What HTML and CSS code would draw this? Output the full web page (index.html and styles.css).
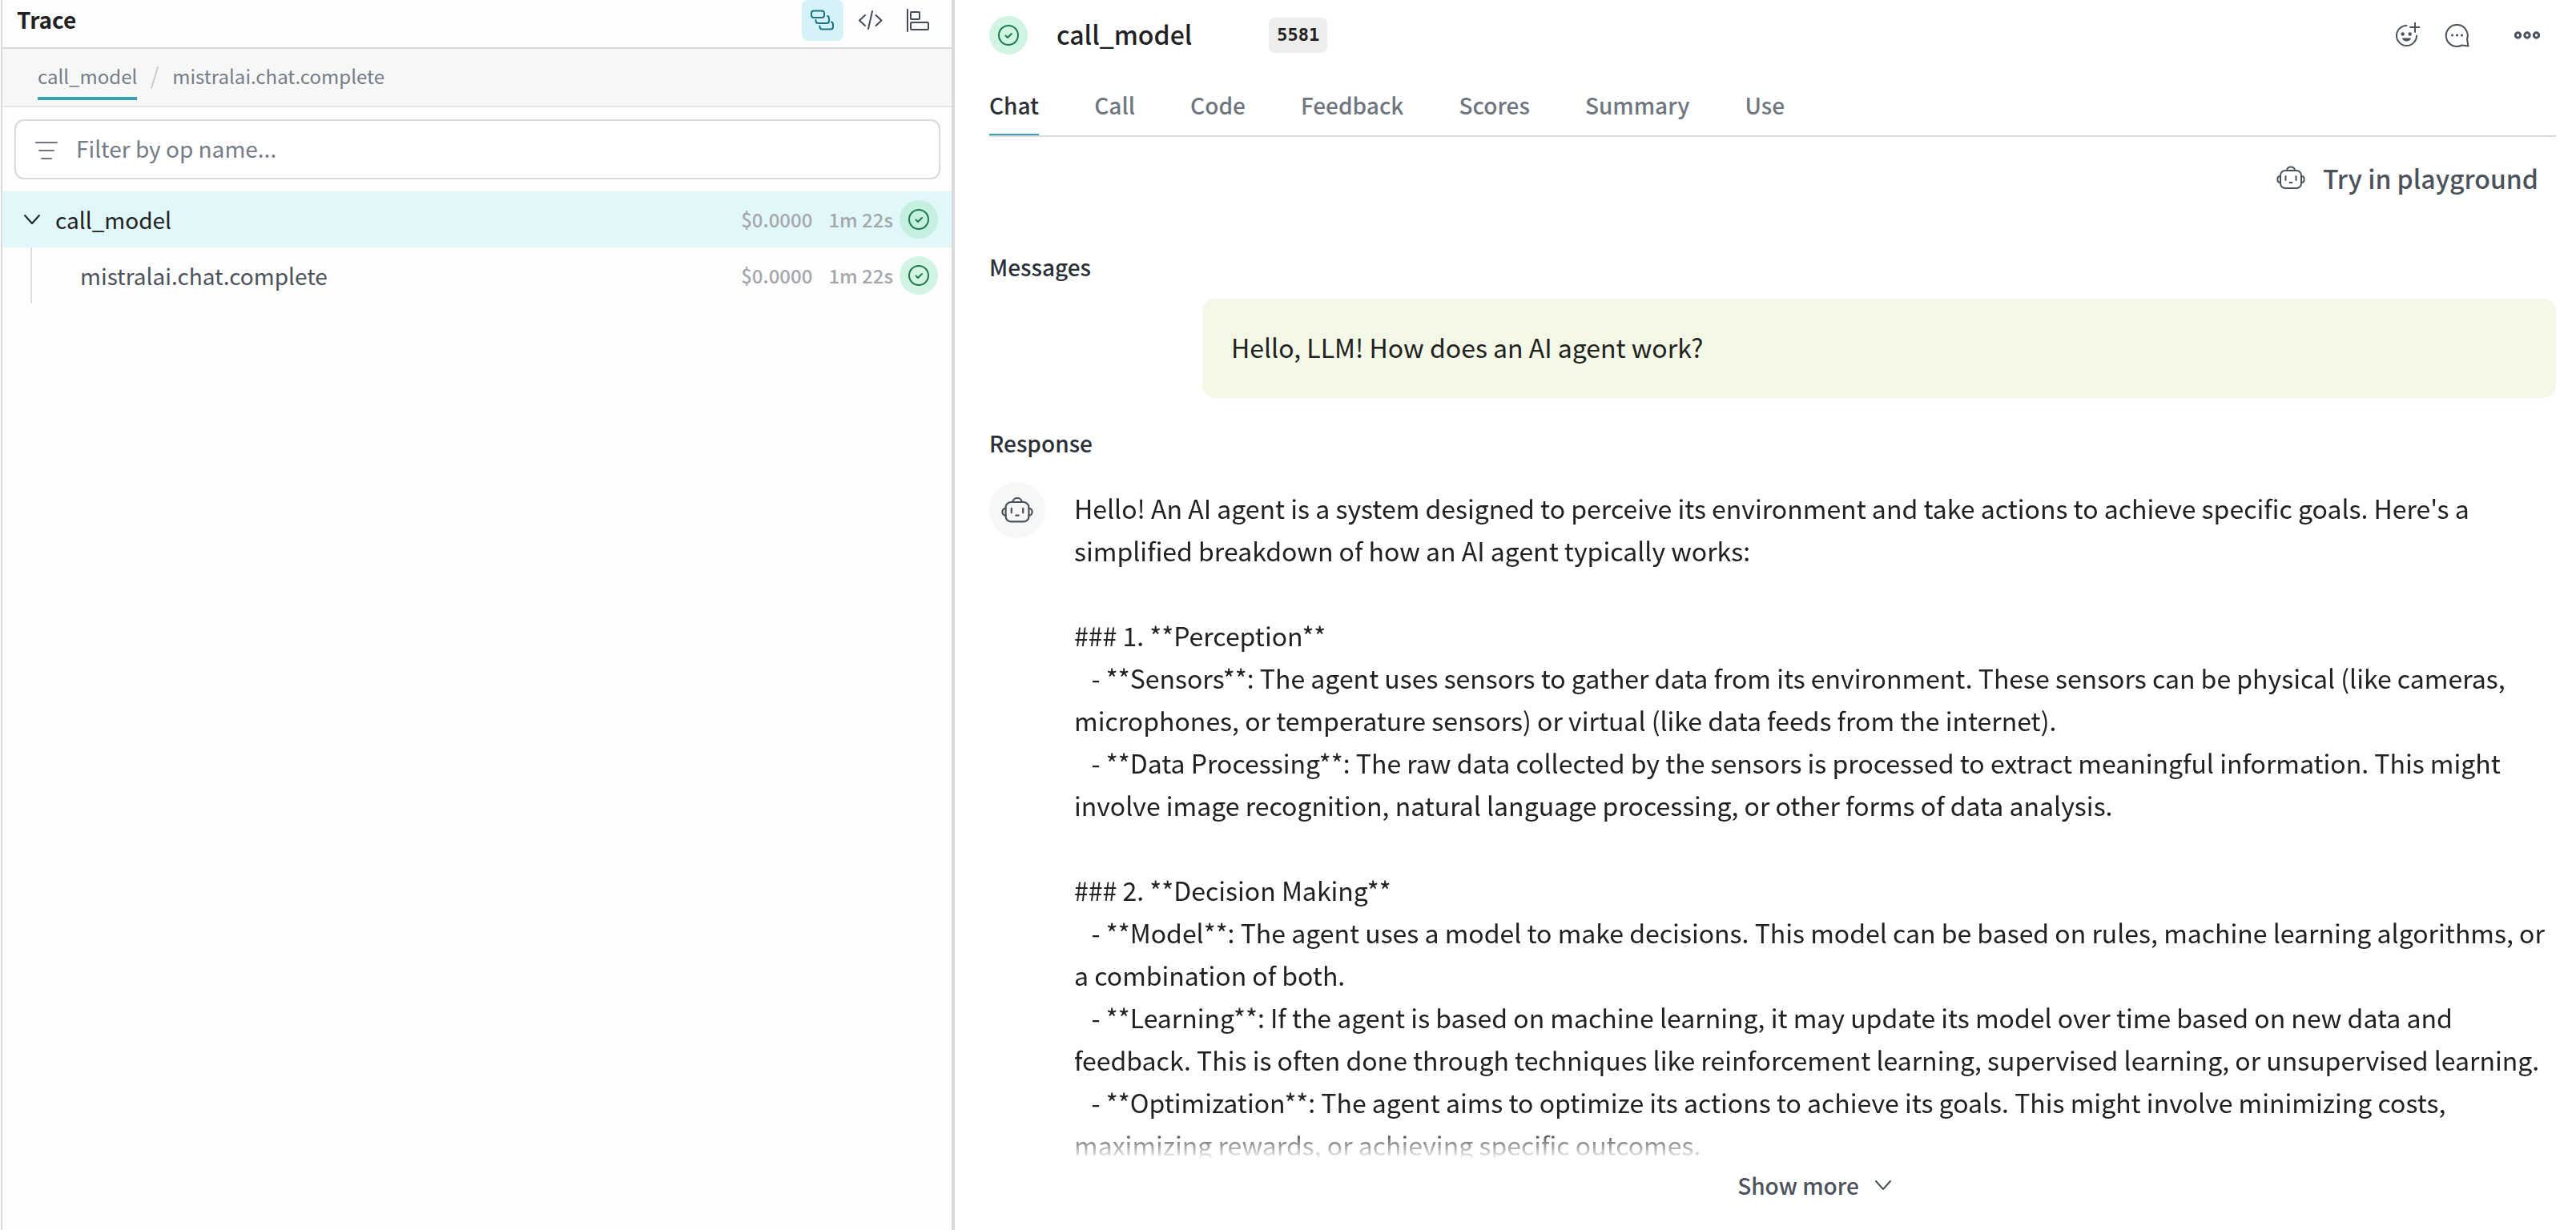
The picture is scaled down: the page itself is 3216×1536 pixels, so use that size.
FILE: index.html
```html
<!DOCTYPE html>
<html lang="en">
<head>
<meta charset="utf-8">
<title>call_model trace</title>
<link rel="stylesheet" href="styles.css">
</head>
<body>
<svg class="sprite" aria-hidden="true">
  <symbol id="check" viewBox="0 0 28 28"><circle cx="14" cy="14" r="12"/><path d="M10.500 14.500l2.500 2.500 5-5"/></symbol>
  <symbol id="robot" viewBox="0 0 36 30"><rect x="5" y="6" width="26" height="22" rx="6"/><path d="M13 6c0-6 10-6 10 0M5 13c-5 0-5 8 0 8M31 13c5 0 5 8 0 8M11.500 13v5M24.500 13v5M16.500 21h3"/></symbol>
  <symbol id="chevron" viewBox="0 0 24 24"><path d="M3 7l9 10 9-10"/></symbol>
</svg>
<div class="app">
  <aside class="trace">
    <header class="trace-head">
      <h2 class="trace-title">Trace</h2>
      <div class="views">
        <button class="view view-on" aria-label="Tree view"><svg class="icon-m" viewBox="0 0 32 32"><rect x="2" y="3.500" width="16" height="8.500" rx="3"/><path d="M7.500 15v1q0 3 3 3h10.500q3 0 3-3v-3q0-2.500-2-3M12.500 22.500v1q0 3 3 3h10.500q3 0 3-3v-3q0-2.500-2-3"/></svg></button>
        <button class="view" aria-label="Code view"><svg class="icon-m" viewBox="0 0 32 32"><path d="M9 9l-7 6.500 7 6.500M22.500 9l7 6.500-7 6.500M18 4l-5 22"/></svg></button>
        <button class="view" aria-label="Timeline view"><svg class="icon-m" viewBox="0 0 32 32"><path d="M2 2v27"/><rect x="6" y="5" width="11" height="9" rx="1"/><rect x="6" y="18" width="22" height="9" rx="1"/></svg></button>
      </div>
    </header>
    <nav class="crumbs" aria-label="Call path">
      <a class="crumb crumb-on" href="#call">call_model</a>
      <svg class="slash" viewBox="0 0 10 28"><path d="M9 1L1 27"/></svg>
      <a class="crumb" href="#complete">mistralai.chat.complete</a>
    </nav>
    <label class="filter">
      <svg class="icon-m" viewBox="0 0 32 32"><path d="M3 9h26M7 19h18M10 29h12"/></svg>
      <input class="filter-input" type="text" placeholder="Filter by op name..." aria-label="Filter by op name">
    </label>
    <ul class="tree">
      <li class="row row-on">
        <svg class="icon-s"><use href="#chevron"/></svg>
        <span class="op">call_model</span><span class="stat">$0.0000</span><span class="stat">1m 22s</span>
        <span class="status"><svg class="icon-check"><use href="#check"/></svg></span>
      </li>
      <li class="row row-child">
        <span class="op">mistralai.chat.complete</span><span class="stat">$0.0000</span><span class="stat">1m 22s</span>
        <span class="status"><svg class="icon-check"><use href="#check"/></svg></span>
      </li>
    </ul>
  </aside>
  <main class="call">
    <header class="call-head">
      <span class="status"><svg class="icon-check"><use href="#check"/></svg></span>
      <h1 class="call-title">call_model</h1>
      <span class="call-id">5581</span>
      <div class="actions">
        <button class="action" aria-label="Add reaction"><svg class="icon-m" viewBox="0 0 32 32"><path d="M15.500 4A12.500 12.500 0 1 0 28 16.500M26 0v12M20 6h12"/><circle class="dot" cx="10.700" cy="14.500" r="2.200"/><circle class="dot" cx="19.700" cy="14.500" r="2.200"/><path class="dot" d="M10 19.500h11q-1 4-5.500 4t-5.500-4z"/></svg></button>
        <button class="action" aria-label="Add comment"><svg class="icon-m" viewBox="0 0 32 32"><path d="M30.500 29.500l-8-1A13.500 13.500 0 1 1 29 21z"/><circle class="dot" cx="10.500" cy="16" r="1.600"/><circle class="dot" cx="16.500" cy="16" r="1.600"/><circle class="dot" cx="22.500" cy="16" r="1.600"/></svg></button>
        <button class="action action-more" aria-label="More"><svg class="icon-m" viewBox="0 0 32 32"><circle cx="4.500" cy="16" r="3.200"/><circle cx="16" cy="16" r="3.200"/><circle cx="27.500" cy="16" r="3.200"/></svg></button>
      </div>
    </header>
    <nav class="tabs" aria-label="Call views">
      <a class="tab tab-on" href="#chat">Chat</a>
      <a class="tab" href="#call">Call</a>
      <a class="tab" href="#code">Code</a>
      <a class="tab" href="#feedback">Feedback</a>
      <a class="tab" href="#scores">Scores</a>
      <a class="tab" href="#summary">Summary</a>
      <a class="tab" href="#use">Use</a>
    </nav>
    <button class="playground"><svg class="icon-robot"><use href="#robot"/></svg><span>Try in playground</span></button>
    <h3 class="label">Messages</h3>
    <p class="prompt">Hello, LLM! How does an AI agent work?</p>
    <h3 class="label">Response</h3>
    <section class="reply">
      <span class="avatar"><svg class="icon-robot icon-robot-lg"><use href="#robot"/></svg></span>
      <div class="reply-main">
        <div class="reply-text">Hello! An AI agent is a system designed to perceive its environment and take actions to achieve specific goals. Here's a simplified breakdown of how an AI agent typically works:

### 1. **Perception**
   - **Sensors**: The agent uses sensors to gather data from its environment. These sensors can be physical (like cameras, microphones, or temperature sensors) or virtual (like data feeds from the internet).
   - **Data Processing**: The raw data collected by the sensors is processed to extract meaningful information. This might involve image recognition, natural language processing, or other forms of data analysis.

### 2. **Decision Making**
   - **Model**: The agent uses a model to make decisions. This model can be based on rules, machine learning algorithms, or a combination of both.
   - **Learning**: If the agent is based on machine learning, it may update its model over time based on new data and feedback. This is often done through techniques like reinforcement learning, supervised learning, or unsupervised learning.
   - **Optimization**: The agent aims to optimize its actions to achieve its goals. This might involve minimizing costs, maximizing rewards, or achieving specific outcomes.</div>
        <button class="more"><span>Show more</span><svg class="icon-s"><use href="#chevron"/></svg></button>
      </div>
    </section>
  </main>
</div>
</body>
</html>
```
FILE: styles.css
```css
* { box-sizing: border-box; }
body {
  margin: 0;
  font-family: "Noto Sans CJK SC", "Noto Sans", sans-serif;
  font-size: 28px;
  line-height: 40px;
  color: #212121;
  background: #fff;
}
h1, h2, h3, p, ul { margin: 0; padding: 0; }
button { border: 0; padding: 0; background: none; font: inherit; color: inherit; cursor: pointer; }
a { color: inherit; text-decoration: none; }
svg { display: block; flex: none; fill: none; stroke: currentColor; stroke-width: 2; stroke-linecap: round; stroke-linejoin: round; }
.sprite { position: absolute; width: 0; height: 0; }
.dot { fill: currentColor; stroke: none; }
.icon-m { width: 32px; height: 32px; }
.icon-s { width: 24px; height: 24px; }
.icon-check { width: 28px; height: 28px; }
.icon-robot { width: 36px; height: 30px; }
.icon-robot-lg { width: 40px; height: 34px; }

.app { display: grid; grid-template-columns: 149fr 253fr; min-height: 100vh; }

/* Call tree */
.trace { margin-left: 1px; border-left: 2px solid #d9d9de; border-right: 4px solid #d9d9de; background: #fdfdfd; }
.trace-head { display: flex; justify-content: space-between; height: 61px; padding: 0 15px 0 18px; border-bottom: 2px solid #d9d9de; }
.trace-title { padding-top: 4px; font-size: 28px; font-weight: 600; }
.views { display: flex; gap: 8px; color: #454b54; }
.view { display: grid; place-items: center; width: 52px; height: 51px; border-radius: 8px; }
.view-on { background: #d4f2f7; color: #1d7488; }
.crumbs { display: flex; align-items: center; gap: 17px; height: 73px; padding: 0 44px; font-size: 24px; color: #757c87; background: #f7f7f7; border-bottom: 2px solid #e6e6e6; }
.crumb { padding: 6px 0; border-bottom: 4px solid transparent; }
.crumb-on { border-color: #38a0b3; }
.slash { width: 10px; height: 28px; color: #c8cacd; }
.filter { display: flex; align-items: center; gap: 21px; height: 75px; margin: 15px 14px 15px 15px; padding: 0 22px 3px; border: 2px solid #d9d9de; border-radius: 12px; background: #fff; color: #6f7680; }
.filter-input { flex: 1; border: 0; padding: 0; outline: 0; background: none; font: inherit; }
.filter-input::placeholder { color: #757c87; opacity: 1; }
.tree { list-style: none; }
.row { display: flex; align-items: center; height: 70px; padding: 0 17px 0 25px; }
.row-on { background: #e1f7fa; }
.row-child { margin-left: 35px; padding-left: 60px; border-left: 2px solid #e0e1e3; color: #4b525c; }
.op { flex: 1; }
.row-on .op { padding-left: 17px; }
.stat { margin-right: 20px; font-size: 24px; font-weight: 500; color: #a5a7ac; }
.stat + .stat { margin-right: 8px; }
.status { display: grid; place-items: center; width: 48px; height: 48px; border-radius: 50%; background: #d2f5e3; color: #1b7a4e; }
.row-on .status { background: #c5f0e0; }

/* Selected call */
.call { padding: 0 25px 0 43px; }
.call-head { display: flex; align-items: center; height: 87px; }
.call-title { margin: 0 96px 0 36px; padding-bottom: 3px; font-size: 32px; font-weight: 500; }
.call-id { padding: 2px 10px; border-radius: 8px; background: #ededed; font-family: "DejaVu Sans Mono", monospace; font-size: 22px; font-weight: 600; }
.actions { display: flex; gap: 30px; margin-left: auto; padding-right: 20px; color: #4b525c; }
.action-more { margin-left: 26px; }
.action-more svg { stroke-width: 3; }
.tabs { display: flex; gap: 69px; height: 84px; border-bottom: 2px solid #d9dade; color: #6f7680; font-weight: 500; }
.tab { padding-top: 24px; }
.tab-on { color: #2b2f38; border-bottom: 2px solid #38a0b3; }
.playground { display: flex; align-items: center; gap: 22px; margin: 27px 22px 67px auto; font-size: 32px; font-weight: 500; line-height: 48px; color: #4b525c; }
.label { color: #2b2f38; font-size: 28px; font-weight: 500; }
.prompt { margin: 20px 0 36px 266px; padding: 34px 36px 38px; border-radius: 16px; background: #f4f8e6; font-size: 32px; line-height: 52px; }
.reply { display: flex; gap: 36px; margin-top: 29px; }
.avatar { display: grid; place-items: center; flex: none; width: 70px; height: 70px; border-radius: 50%; background: #f7f7f7; color: #4b525c; }
.reply-main { flex: 1; }
.reply-text { padding-top: 6px; font-size: 32px; line-height: 53px; white-space: pre-wrap; -webkit-mask-image: linear-gradient(#000 calc(100% - 48px), transparent calc(100% - 8px)); mask-image: linear-gradient(#000 calc(100% - 48px), transparent calc(100% - 8px)); }
.more { display: flex; align-items: center; gap: 18px; margin: 4px auto; font-weight: 500; color: #4b525c; }
```
